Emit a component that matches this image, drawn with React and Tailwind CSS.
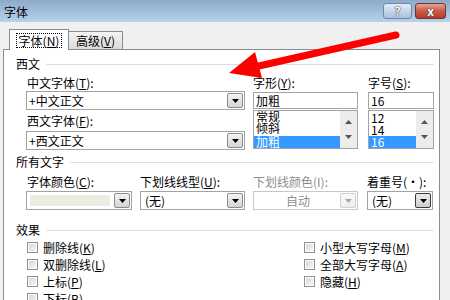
import clsx from "clsx";

const Tri = ({ color = "#000" }) => (
  <svg width="7" height="4" viewBox="0 0 7 4">
    <path d="M0 0h7L3.5 4z" fill={color} />
  </svg>
);

const TriUp = ({ color = "#555" }) => (
  <svg width="7" height="4" viewBox="0 0 7 4">
    <path d="M0 4h7L3.5 0z" fill={color} />
  </svg>
);

function DropBtn({ disabled, dark }) {
  return (
    <div
      className={clsx(
        "absolute right-px top-px bottom-px w-[16px] rounded-[2px] border flex items-center justify-center bg-linear-to-b",
        disabled
          ? "border-[#d0d0d0] from-[#f8f8f8] to-[#efefef]"
          : dark
          ? "border-[#3a3a3a] from-[#ececec] to-[#cdcdcd]"
          : "border-[#8c8c8c] from-[#f4f4f4] to-[#d4d4d4]"
      )}
    >
      <Tri color={disabled ? "#a8a8a8" : "#000"} />
    </div>
  );
}

function Combo({ className, children, disabled, dark }) {
  return (
    <div
      className={clsx(
        "relative h-[19px] border bg-white flex items-center",
        disabled ? "border-[#c8c8c8]" : "border-[#a3a3a3]",
        className
      )}
    >
      {children}
      <DropBtn disabled={disabled} dark={dark} />
    </div>
  );
}

function Label({ children, className }) {
  return (
    <div className={clsx("h-[14px] leading-[14px] text-[12px] whitespace-nowrap", className)}>
      {children}
    </div>
  );
}

function Section({ title, className }) {
  return (
    <div className={clsx("h-[14px] flex items-center pl-[12px] pr-[5px]", className)}>
      <span className="text-[12px] leading-[14px]">{title}</span>
      <div className="flex-1 h-px bg-[#d5dfe5] ml-[6px]" />
    </div>
  );
}

function ScrollCol() {
  return (
    <div className="w-[17px] h-full bg-[#ececec] flex flex-col items-center justify-between py-[9px]">
      <TriUp />
      <Tri color="#555" />
    </div>
  );
}

function Check({ label, k }) {
  return (
    <div className="h-[17px] flex items-center gap-[5px]">
      <div className="w-[11px] h-[11px] border border-[#8f8f8f] p-px bg-white">
        <div className="w-full h-full bg-linear-to-br from-[#d8d8d8] to-[#f6f6f6]" />
      </div>
      <span className="text-[12px] leading-[14px] whitespace-nowrap">
        {label}(<u>{k}</u>)
      </span>
    </div>
  );
}

export default function App() {
  return (
    <div className="relative w-[450px] h-[300px] overflow-hidden bg-[#f0f0f0] text-black font-['Noto_Sans_CJK_SC','Noto_Sans',sans-serif]">
      {/* title bar */}
      <div className="h-[22px] bg-linear-to-b from-[#8eaacb] to-[#b8d1ec] flex items-center pl-[4px] pr-[4px]">
        <span className="text-[12px] leading-[14px] mt-px">字体</span>
        <div className="ml-auto flex items-center gap-[3px]">
          <div className="w-[29px] h-[16px] rounded-[3px] border border-[#6f87a8] bg-linear-to-b from-[#e4edf7] via-[#c3d5ea] to-[#a9c1df] flex items-center justify-center">
            <span className="text-[12px] font-bold leading-none text-white [text-shadow:0_0_1px_#222,0_0_1px_#222]">?</span>
          </div>
          <div className="w-[31px] h-[16px] rounded-[3px] border border-[#76332a] bg-linear-to-b from-[#e5a395] via-[#c95b48] to-[#b53d2c] flex items-center justify-center">
            <span className="text-[12px] font-bold leading-none text-white [text-shadow:0_0_1px_#333,0_0_1px_#333]">x</span>
          </div>
        </div>
      </div>

      {/* tabs */}
      <div className="h-[27px] flex items-end pl-[9px]">
        <div className="relative z-10 -mb-px h-[21px] w-[60px] bg-white border border-b-0 border-[#898c95] flex items-center justify-center">
          <div className="border border-dotted border-black px-[2px] h-[15px] leading-[13px] text-[12px] mt-[1px]">
            字体(<u>N</u>)
          </div>
        </div>
        <div className="h-[18px] w-[54px] border border-b-0 border-l-0 border-[#898c95] bg-linear-to-b from-[#f3f3f3] to-[#dcdcdc] flex items-center justify-center text-[12px] leading-[14px]">
          高级(<u>V</u>)
        </div>
      </div>

      {/* page */}
      <div className="ml-[3px] w-[437px] h-[252px] bg-white border-l border-t border-r border-[#898c95]">
        <Section title="西文" className="mt-[7px]" />

        <div className="mt-[5px] pl-[22px] flex">
          <div className="w-[219px]">
            <Label className="pl-px">中文字体(<u>T</u>):</Label>
            <Combo className="mt-px">
              <span className="pl-[2px] text-[12px] leading-[14px]">+中文正文</span>
            </Combo>
            <Label className="mt-[4px] pl-px">西文字体(<u>F</u>):</Label>
            <Combo className="mt-[3px]">
              <span className="pl-[2px] text-[12px] leading-[14px]">+西文正文</span>
            </Combo>
          </div>

          <div className="w-[105px] ml-[8px]">
            <Label>字形(<u>Y</u>):</Label>
            <div className="mt-[2px] h-[17px] border border-[#a3a3a3] flex items-center pl-[2px] text-[12px] leading-[14px]">
              加粗
            </div>
            <div className="mt-px h-[39px] border border-[#a3a3a3] flex overflow-hidden">
              <div className="flex-1 flex flex-col text-[12px]">
                <div className="h-[11px] leading-[11px] pl-[2px] overflow-hidden">常规</div>
                <div className="h-[14px] leading-[11px] pl-[2px]">倾斜</div>
                <div className="h-[12px] leading-[12px] pl-[2px] bg-[#3399ff] text-white">加粗</div>
              </div>
              <ScrollCol />
            </div>
          </div>

          <div className="w-[66px] ml-[10px]">
            <Label>字号(<u>S</u>):</Label>
            <div className="mt-[2px] h-[17px] border border-[#a3a3a3] flex items-center pl-[2px] text-[12px] leading-[14px]">
              16
            </div>
            <div className="mt-px h-[39px] border border-[#a3a3a3] flex overflow-hidden">
              <div className="flex-1 flex flex-col text-[12px] pt-px">
                <div className="h-[12px] leading-[12px] pl-[2px]">12</div>
                <div className="h-[12px] leading-[12px] pl-[2px]">14</div>
                <div className="h-[12px] leading-[12px] pl-[2px] bg-[#3399ff] text-white">16</div>
              </div>
              <ScrollCol />
            </div>
          </div>
        </div>

        <Section title="所有文字" className="mt-[5px]" />

        <div className="mt-[6px] pl-[22px] flex">
          <div className="w-[106px]">
            <Label className="pl-px">字体颜色(<u>C</u>):</Label>
            <Combo className="mt-[2px]">
              <div className="ml-[3px] w-[80px] h-[11px] bg-[#ecebe1]" />
            </Combo>
          </div>
          <div className="w-[105px] ml-[8px]">
            <Label>下划线线型(<u>U</u>):</Label>
            <Combo className="mt-[2px]">
              <span className="pl-[4px] text-[12px] leading-[14px]">(无)</span>
            </Combo>
          </div>
          <div className="w-[105px] ml-[8px]">
            <Label className="text-[#8d8d8d]">下划线颜色(I):</Label>
            <Combo className="mt-[2px]" disabled>
              <span className="w-[88px] text-center text-[12px] leading-[14px] text-[#8d8d8d]">自动</span>
            </Combo>
          </div>
          <div className="w-[66px] ml-[9px]">
            <Label>着重号(·):</Label>
            <Combo className="mt-[2px]" dark>
              <span className="pl-[4px] text-[12px] leading-[14px]">(无)</span>
            </Combo>
          </div>
        </div>

        <Section title="效果" className="mt-[13px]" />

        <div className="mt-[2px] pl-[23px] flex">
          <div className="w-[277px] flex flex-col">
            <Check label="删除线" k="K" />
            <Check label="双删除线" k="L" />
            <Check label="上标" k="P" />
            <Check label="下标" k="B" />
          </div>
          <div className="flex flex-col">
            <Check label="小型大写字母" k="M" />
            <Check label="全部大写字母" k="A" />
            <Check label="隐藏" k="H" />
          </div>
        </div>
      </div>

      {/* red annotation arrow */}
      <svg className="absolute inset-0 pointer-events-none" width="450" height="300" viewBox="0 0 450 300">
        <line x1="396" y1="35" x2="250" y2="68" stroke="#ff0000" strokeWidth="7" strokeLinecap="round" />
        <polygon points="229,73 255,52 262,78" fill="#ff0000" />
      </svg>
    </div>
  );
}
